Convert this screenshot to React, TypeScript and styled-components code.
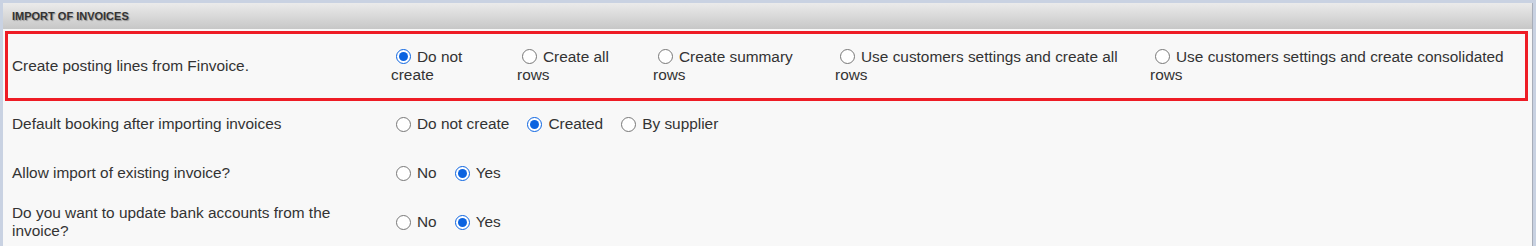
import React from "react";
import styled, { createGlobalStyle } from "styled-components";

const GlobalStyle = createGlobalStyle`
  html, body {
    margin: 0;
    padding: 0;
    overflow: hidden;
    background: #c9d2e2;
  }
  body {
    font-family: "Liberation Sans", Arial, sans-serif;
  }
`;

const Panel = styled.section`
  margin: 3px 3px 0 3px;
  min-height: 243px;
  background: #f8f8f8;
  border-right: 1px solid #a7adb8;
`;

const Header = styled.header`
  height: 26px;
  display: flex;
  align-items: center;
  padding-left: 9px;
  background: linear-gradient(#ebebeb, #c7c7c7);
  color: #333;
  font: bold 11px "Liberation Sans", Arial, sans-serif;
  text-transform: uppercase;
  text-shadow: 1px 1px 1px rgba(0, 0, 0, 0.3);
`;

const Highlight = styled.div`
  margin: 2px 4px 0 2px;
  border: 3px solid #ee1c25;
`;

const Row = styled.div<{ $pad: number; $boxed?: boolean }>`
  display: grid;
  grid-template-columns: 379px 1fr;
  align-items: center;
  padding: ${(p) => (p.$boxed ? "0 0 1px" : "5px 0 8px")};
  padding-left: ${(p) => p.$pad}px;
  min-height: ${(p) => (p.$boxed ? 64 : 36)}px;
  box-sizing: ${(p) => (p.$boxed ? "border-box" : "content-box")};
`;

const Label = styled.div`
  padding-right: 20px;
  color: #333;
  font-size: 15.4px;
  line-height: 18px;
`;

const ChoiceGrid = styled.div`
  display: grid;
  grid-template-columns: 126px 136px 182px 315px 1fr;
  align-items: start;
`;

const ChoiceInline = styled.div`
  display: flex;
  flex-wrap: wrap;
  column-gap: 13px;
`;

const Choice = styled.label<{ $boxed?: boolean }>`
  display: block;
  padding-right: ${(p) => (p.$boxed ? 12 : 0)}px;
  color: #333;
  font-size: 15.4px;
  line-height: 18px;
  cursor: pointer;
`;

const Radio = styled.input.attrs({ type: "radio" })`
  width: 15px;
  height: 15px;
  margin: 0 6px 0 5px;
  vertical-align: -2.5px;
  accent-color: #0b63e0;
`;

type Option = { label: string; checked?: boolean };

type Setting = { name: string; label: string; options: Option[] };

const posting: Setting = {
  name: "posting",
  label: "Create posting lines from Finvoice.",
  options: [
    { label: "Do not create", checked: true },
    { label: "Create all rows" },
    { label: "Create summary rows" },
    { label: "Use customers settings and create all rows" },
    { label: "Use customers settings and create consolidated rows" },
  ],
};

const settings: Setting[] = [
  {
    name: "booking",
    label: "Default booking after importing invoices",
    options: [
      { label: "Do not create" },
      { label: "Created", checked: true },
      { label: "By supplier" },
    ],
  },
  {
    name: "existing",
    label: "Allow import of existing invoice?",
    options: [{ label: "No" }, { label: "Yes", checked: true }],
  },
  {
    name: "bank",
    label: "Do you want to update bank accounts from the invoice?",
    options: [{ label: "No" }, { label: "Yes", checked: true }],
  },
];

export default function App() {
  return (
    <>
      <GlobalStyle />
      <Panel>
        <Header>Import of invoices</Header>
        <Highlight>
          <Row $pad={4} $boxed>
            <Label>{posting.label}</Label>
            <ChoiceGrid>
              {posting.options.map((o) => (
                <Choice key={o.label} $boxed>
                  <Radio name={posting.name} defaultChecked={o.checked} />
                  {o.label}
                </Choice>
              ))}
            </ChoiceGrid>
          </Row>
        </Highlight>
        {settings.map((s) => (
          <Row key={s.name} $pad={9}>
            <Label>{s.label}</Label>
            <ChoiceInline>
              {s.options.map((o) => (
                <Choice key={o.label}>
                  <Radio name={s.name} defaultChecked={o.checked} />
                  {o.label}
                </Choice>
              ))}
            </ChoiceInline>
          </Row>
        ))}
      </Panel>
    </>
  );
}
